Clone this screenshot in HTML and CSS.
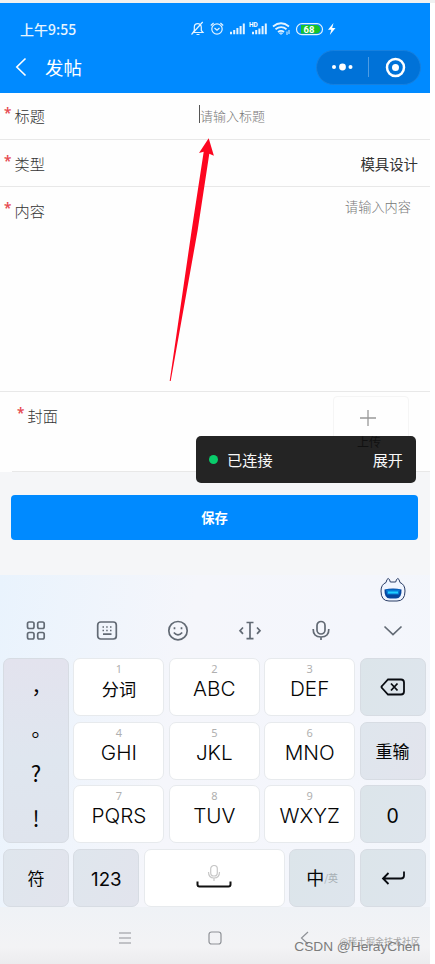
FILE: index.html
```html
<!DOCTYPE html>
<html lang="zh-CN">
<head>
<meta charset="utf-8">
<title>发帖</title>
<link rel="stylesheet" href="styles.css">
</head>
<body>
<div class="phone">
  <header class="header">
    <div class="status">
      <span class="time">上午9:55</span>
      <svg class="status-icons" width="148" height="18" viewBox="0 0 148 18" fill="none" stroke="#e4f3ff" stroke-width="1.2">
        <path d="M3 12.5h10l-1.7-2V7.2a3.5 3.5 0 0 0-7 0v3.3zM6.5 14.5h3M1.5 14.5 12.7 2"/>
        <circle cx="27" cy="9" r="5.2"/><path d="m24.5 8 2.500 2.300L29.500 8M20.800 5.500l2.800-2.500M33.200 5.500l-2.800-2.500"/>
        <g stroke-width="2"><path d="M41 14.200v-2.500M44.200 14.200v-4.200M47.400 14.200V8M50.600 14.200V6M53.800 14.200V3.500"/><path d="M63 14.200v-2.500M66.200 14.200v-4.200M69.400 14.200V8.500M72.600 14.200V6M75.800 14.200V3.500"/></g>
        <g stroke-width="1.800"><path d="M83 6.500c5-4 11-4 16 0M85.500 9.300c4-3 7.500-3 11 0M88 12c2-1.500 4-1.500 6 0"/></g><path d="M91 14.500l-1.500-1.500h3zM97 11.500v3.500M99 10v4" stroke-width="1"/>
        <rect x="106.500" y="3.700" width="26" height="11" rx="5.500"/><path d="M111 5h15a4.200 4.200 0 0 1 0 8.500h-15z" fill="#17c429" stroke="none"/>
        <path d="M143.500 3 138 9.700h3.300L139.800 15l5.700-7h-3.300z" fill="#fff" stroke="none"/>
        <text class="hd" x="59" y="6.500">HD</text><text class="charge" x="113.500" y="12.700">68</text>
      </svg>
    </div>
    <div class="navbar">
      <svg width="12" height="20" viewBox="0 0 12 20" fill="none" stroke="#fff" stroke-width="1.600"><path d="M10.500 1.500 1.800 10l8.700 8.500"/></svg>
      <h1>发帖</h1>
      <div class="capsule">
        <svg width="104" height="34" viewBox="0 0 104 34" fill="#fff"><circle cx="17" cy="16" r="2"/><circle cx="25.500" cy="16" r="3.400"/><circle cx="33.500" cy="16" r="2"/><path d="M51 6h1v20h-1z" opacity=".3"/><circle cx="78.500" cy="16.500" r="8.500" fill="none" stroke="#fff" stroke-width="2.500"/><circle cx="78.500" cy="16.500" r="3.500"/></svg>
      </div>
    </div>
  </header>

  <main class="form">
    <div class="row title-row"><label><b>*</b>标题</label><div class="input">请输入标题</div></div>
    <div class="row type-row"><label><b>*</b>类型</label><span class="value">模具设计</span></div>
    <div class="row content-row"><label><b>*</b>内容</label><span class="placeholder">请输入内容</span></div>
    <div class="row cover-row"><label><b>*</b>封面</label>
      <div class="upload"><svg width="16" height="16" viewBox="0 0 16 16" stroke="#999" stroke-width="1.300"><path d="M8 0v16M0 8h16"/></svg></div>
    </div>
    <div class="toast"><i></i><span>已连接</span><span class="expand">展开</span><small>上传</small></div>
    <svg class="arrow" width="50" height="250" viewBox="0 0 50 250"><path d="M43.700 4.300 34 18.900l4.700-1.200-12 78.300-22 151h1L32.700 96l11.600-76.300 4.600 2z" fill="#fd0620"/></svg>
  </main>
  <div class="actions"><button class="save">保存</button></div>

  <section class="keyboard">
    <div class="assistant">
      <svg width="26" height="26" viewBox="0 0 26 26"><path d="M6 5.500 7 2.500q1-2 2.500 0l.8 2.500h5.400l.8-2.500q1.500-2 2.500 0l1 3q5 2 5 8.500 0 10-8 10H9q-8 0-8-10 0-6.500 5-8.500z" fill="#f0f5ff" stroke="#293c65"/><path d="M4.500 12.500q8.500-2 17 0 .5 9-5.500 9h-6q-6 0-5.500-9z" fill="#07469d"/><path d="M6 12.500h14l-1 5H7z" fill="#087bd8"/><path d="M8 15.500h10" stroke="#21d0ff" stroke-width="2"/></svg>
    </div>
    <div class="toolbar">
      <svg viewBox="0 0 24 24"><rect x="3.500" y="3" width="6.500" height="6.500" rx="1.700"/><rect x="13.700" y="3" width="6.500" height="6.500" rx="1.700"/><rect x="3.500" y="13.500" width="6.500" height="6.500" rx="1.700"/><rect x="13.700" y="13.500" width="6.500" height="6.500" rx="1.700"/></svg>
      <svg viewBox="0 0 24 24"><rect x="2.700" y="3" width="18.600" height="17" rx="3"/><path d="M7.500 8h1.500M11.200 8h1.500M15 8h1.500M7.500 11.500h1.500M11.200 11.500h1.500M15 11.500h1.500M8 15.200h8.500"/></svg>
      <svg viewBox="0 0 24 24"><circle cx="12" cy="11.700" r="9.200"/><path d="M8.500 8.300v2M15.500 8.300v2M7.800 13.500q4.200 4.800 8.400 0"/></svg>
      <svg viewBox="0 0 24 24"><path d="M8.500 3.500h7M8.500 19.700h7M12 3.500v16.200M5 8.500l-3 3.200 3 3.200M19 8.500l3 3.200-3 3.200"/></svg>
      <svg viewBox="0 0 24 24"><rect x="8" y="2.500" width="8" height="12.500" rx="4"/><path d="M4.200 10q-.2 8 7.800 8t7.800-8M12 18v3"/></svg>
      <svg viewBox="0 0 24 24"><path d="m3.500 7.500 8.500 8 8.500-8"/></svg>
    </div>
    <div class="keys">
      <div class="key fn punct"><span>，</span><span>。</span><span>?</span><span>!</span></div>
      <div class="key cn"><small>1</small><span>分词</span></div><div class="key"><small>2</small><span>ABC</span></div><div class="key"><small>3</small><span>DEF</span></div>
      <div class="key fn cool"><svg width="26" height="18" viewBox="0 0 26 18" fill="none" stroke="#080b10" stroke-width="1.800"><path d="M8 1.500h13q3 0 3 3v9q0 3-3 3H8L2 10q-1-1 0-2zM11 5.500l6.500 7M17.500 5.500l-6.500 7"/></svg></div>
      <div class="key"><small>4</small><span>GHI</span></div><div class="key"><small>5</small><span>JKL</span></div><div class="key"><small>6</small><span>MNO</span></div>
      <div class="key fn reset">重输</div>
      <div class="key"><small>7</small><span>PQRS</span></div><div class="key"><small>8</small><span>TUV</span></div><div class="key"><small>9</small><span>WXYZ</span></div>
      <div class="key fn cool zero">0</div>
    </div>
    <div class="bottom-keys">
      <div class="key fn sym">符</div><div class="key fn num">123</div>
      <div class="key"><svg width="36" height="26" viewBox="0 0 36 26" fill="none" stroke="#c7c7c7" stroke-width="1.200"><rect x="14.700" y=".5" width="6.600" height="10.500" rx="3.300"/><path d="M12.500 7q0 6 5.500 6t5.500-6M18 13v3"/><path d="M1.500 16.500v3q0 2 2 2h29q2 0 2-2v-3" stroke="#111" stroke-width="2"/></svg></div>
      <div class="key fn cool lang">中<small>/英</small></div>
      <div class="key fn cool"><svg width="24" height="16" viewBox="0 0 24 16" fill="none" stroke="#080b10" stroke-width="1.800"><path d="M23 1.500v4q0 3-3 3H2M7.500 3 2 8.500 7.500 14"/></svg></div>
    </div>
    <footer class="system-nav">
      <svg viewBox="0 0 14 14"><path d="M1 2h12M1 7h12M1 12h12"/></svg>
      <svg viewBox="0 0 14 14"><rect x="1" y="1" width="12" height="12" rx="2.500"/></svg>
      <svg viewBox="0 0 14 14"><path d="M10 1 3.500 7l6.500 6"/></svg>
      <span class="mark community">@稀土掘金技术社区</span><span class="mark author">CSDN @HerayChen</span>
    </footer>
  </section>
</div>
</body>
</html>
```
FILE: styles.css
```css
* { box-sizing: border-box; }
body { margin: 0; background: #fff; font-family: "Noto Sans CJK SC", sans-serif; border-top: 3px solid #f0f1f1; height: 964px; overflow: hidden; }
.phone { width: 430px; height: 961px; background: #f5f6f8; }
svg { display: block; flex: none; }
.header { height: 90px; background: #008aff; color: #fff; }
.status { height: 48px; padding: 17px 0 0 20px; display: flex; }
.time { width: 170px; font-size: 14px; line-height: 18px; font-weight: 500; color: #e8f5ff; }
.hd, .charge { fill: #fff; stroke: none; font-family: Roboto, sans-serif; font-weight: 700; }
.hd { font-size: 6.500px; }
.charge { font-size: 9.500px; }
.navbar { display: flex; align-items: center; height: 32px; padding: 0 9px 0 15px; }
.navbar h1 { margin: 0 0 0 18px; font-size: 18.500px; line-height: 30px; font-weight: 400; }
.capsule { margin-left: auto; width: 105px; height: 35px; border: 1px solid #1680df; border-radius: 18px; background: #0072d8; }
.form { position: relative; background: #fefefe; height: 379px; }
.row { display: flex; align-items: flex-start; border-bottom: 1px solid #e8e8e8; padding-left: 4px; }
.row label { font-size: 15.200px; line-height: 22px; font-weight: 300; color: #333; display: flex; }
.row b { color: #e64a50; font: 600 13.500px/19px "Noto Sans", sans-serif; width: 10.500px; }
.title-row { height: 47px; padding-top: 11px; }
.input { margin-left: 154px; border-left: 1px solid #555; height: 18px; margin-top: 1px; line-height: 22px; font-size: 13px; font-weight: 300; color: #777; }
.type-row { height: 47px; padding-top: 12px; }
.value { margin: 0 12px 0 auto; font-size: 14.400px; line-height: 23px; color: #333; }
.content-row { height: 205px; padding-top: 12px; }
.placeholder { margin: -2px 19px 0 auto; font-size: 13.200px; line-height: 20px; font-weight: 300; color: #777; }
.cover-row { height: 80px; margin-left: 12px; padding: 12px 0 0 5px; }
.upload { width: 76px; height: 70px; margin: -8px 21px 0 auto; border: 1px solid #f5f5f5; border-radius: 4px; display: flex; justify-content: center; padding: 13px 6px 0 0; }
.toast { position: absolute; left: 196px; top: 343px; width: 220px; height: 47px; border-radius: 5px; background: #242424; color: #f8f8f8; display: flex; align-items: center; padding: 0 13px 1px; font-size: 15.200px; }
.toast i { width: 9px; height: 9px; border-radius: 50%; background: #09cc6b; margin: 1px 9px 0 0; }
.expand { margin-left: auto; }
.toast small { position: absolute; left: 161px; top: -2px; font-size: 12px; line-height: 16px; color: #111; }
.arrow { position: absolute; left: 165px; top: 41px; }
.actions { padding: 23px 12px 35px 11px; }
.save { display: block; width: 100%; height: 45px; border: 0; border-radius: 4px; background: #008aff; color: #fff; font: 700 13.300px "Noto Sans CJK SC", sans-serif; }
.keyboard { height: 389px; background: linear-gradient(100deg, #e9f3fd 0%, #f5f6fb 40%, #f4f6fc 75%, #f3f6fb 100%); }
.assistant { height: 30px; padding: 2px 0 0 380px; }
.toolbar { height: 53px; display: grid; grid-template-columns: repeat(6, 71.400px); padding-top: 14px; justify-items: center; }
.toolbar svg { width: 24px; height: 24px; fill: none; stroke: #626a74; stroke-width: 1.700; }
.keys { display: grid; grid-template-columns: 66px 91px 91px 91px 66px; grid-template-rows: repeat(3, 58px); gap: 5.700px 4.400px; padding: 0 0 0 3px; }
.key { position: relative; display: flex; flex-direction: column; align-items: center; justify-content: center; background: #fff; border: 1px solid #e7eaed; border-radius: 7px; color: #050505; }
.keys .key > small { font: 400 11px/14px "Noto Sans", sans-serif; color: #b0b0b0; margin-top: -10px; }
.keys .key > small + span { line-height: 26px; font-family: Inter, sans-serif; font-weight: 300; font-size: 20.700px; }
.keys .cn > small + span { font: 400 17.200px/26px "Noto Sans CJK SC", sans-serif; }
.fn { background: linear-gradient(110deg, #dfe6ed, #e2e4ed); border-color: #d7dce3; }
.fn.cool { background: linear-gradient(110deg, #dce5ea, #dee5ed); }
.keys .punct { grid-row: 1 / 4; justify-content: flex-start; padding-top: 6px; font: 400 22px/43.300px "Noto Sans CJK SC", sans-serif; background: linear-gradient(#e3e3ee, #dfe6ef 55%, #dfe4ed); }
.punct span { height: 43.300px; }
.punct span:first-child, .punct span:nth-child(2) { font-size: 20px; padding-left: 11px; }
.punct span:last-child { padding-top: 2px; }
.punct span:first-child { margin-top: -1px; }
.key.reset, .key.sym { font: 400 17px "Noto Sans CJK SC", sans-serif; padding-bottom: 1px; }
.key.zero { font: 400 19.500px Inter, sans-serif; padding-top: 4px; }
.key.num { font: 400 18.700px Inter, sans-serif; padding-top: 2px; }
.bottom-keys { display: grid; grid-template-columns: 66px 66px 141px 66px 66px; gap: 4.400px; height: 58px; padding-left: 3px; margin-top: 6px; }
.key.lang { flex-direction: row; font: 400 18px "Noto Sans CJK SC", sans-serif; padding-bottom: 2px; }
.lang small { font-size: 10px; color: #a7afb4; }
.system-nav { position: relative; height: 57px; background: linear-gradient(#eff2f6, #f3f3f5 70%, #ececee); display: grid; grid-template-columns: repeat(3, 90px); justify-content: center; justify-items: center; padding-top: 24px; }
.system-nav svg { width: 14px; height: 14px; fill: none; stroke: #8f9297; stroke-width: 1.200; }
.mark { position: absolute; white-space: nowrap; }
.community { right: 10px; top: 26px; font-size: 9px; line-height: 18px; color: #a5a5a5; }
.author { right: 10px; top: 30px; font: 13.700px/20px "Liberation Sans", sans-serif; color: #7c7c7c; }
```
